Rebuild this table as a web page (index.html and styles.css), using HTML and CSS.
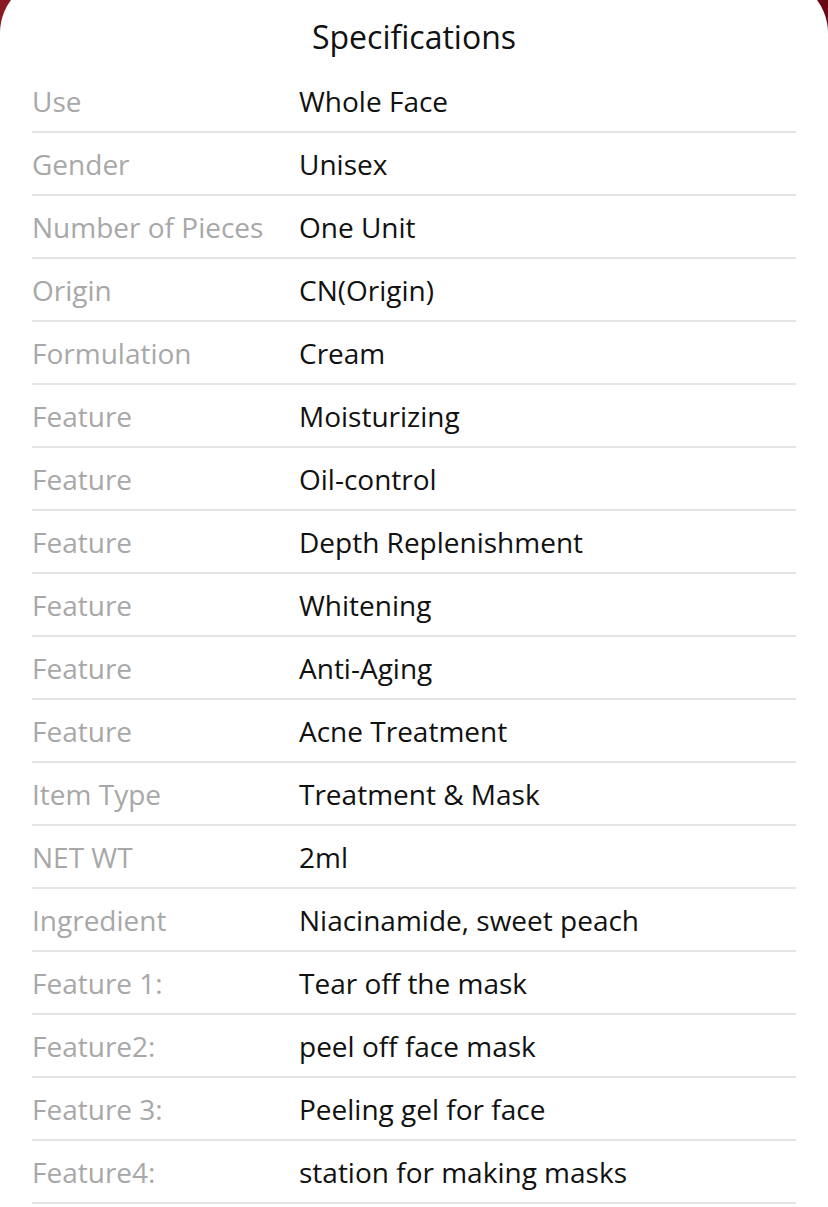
FILE: index.html
```html
<!DOCTYPE html>
<html>
<head>
<meta charset="utf-8">
<link rel="stylesheet" href="styles.css">
</head>
<body>
<div class="sheet">
  <h1 class="title">Specifications</h1>
  <div class="specs">
    <div class="row"><span class="label">Use</span><span class="value">Whole Face</span></div>
    <div class="row"><span class="label">Gender</span><span class="value">Unisex</span></div>
    <div class="row"><span class="label">Number of Pieces</span><span class="value">One Unit</span></div>
    <div class="row"><span class="label">Origin</span><span class="value">CN(Origin)</span></div>
    <div class="row"><span class="label">Formulation</span><span class="value">Cream</span></div>
    <div class="row"><span class="label">Feature</span><span class="value">Moisturizing</span></div>
    <div class="row"><span class="label">Feature</span><span class="value">Oil-control</span></div>
    <div class="row"><span class="label">Feature</span><span class="value">Depth Replenishment</span></div>
    <div class="row"><span class="label">Feature</span><span class="value">Whitening</span></div>
    <div class="row"><span class="label">Feature</span><span class="value">Anti-Aging</span></div>
    <div class="row"><span class="label">Feature</span><span class="value">Acne Treatment</span></div>
    <div class="row"><span class="label">Item Type</span><span class="value">Treatment &amp; Mask</span></div>
    <div class="row"><span class="label">NET WT</span><span class="value">2ml</span></div>
    <div class="row"><span class="label">Ingredient</span><span class="value">Niacinamide, sweet peach</span></div>
    <div class="row"><span class="label">Feature 1:</span><span class="value">Tear off the mask</span></div>
    <div class="row"><span class="label">Feature2:</span><span class="value">peel off face mask</span></div>
    <div class="row"><span class="label">Feature 3:</span><span class="value">Peeling gel for face</span></div>
    <div class="row"><span class="label">Feature4:</span><span class="value">station for making masks</span></div>
  </div>
</div>
</body>
</html>
```

FILE: styles.css
```css
html, body {
  margin: 0;
  padding: 0;
}
body {
  background: linear-gradient(90deg, #8a1a22 0%, #7a1119 50%, #6a0812 100%);
  font-family: "Open Sans", "Noto Sans", sans-serif;
  height: 1207px;
  overflow: hidden;
}
.sheet {
  background: #fff;
  margin-top: -22px;
  padding: 22px 32px 0;
  border-radius: 55px 55px 0 0;
  height: 1229px;
  box-sizing: border-box;
}
.title {
  margin: 0;
  height: 70px;
  box-sizing: border-box;
  padding-top: 4px;
  display: flex;
  align-items: center;
  justify-content: center;
  font-size: 32px;
  font-weight: 400;
  color: #111;
  line-height: 1;
}
.specs {
  display: flex;
  flex-direction: column;
}
.row {
  display: grid;
  grid-template-columns: 267px 1fr;
  align-items: center;
  height: 63px;
  box-sizing: border-box;
  padding-top: 2px;
  border-bottom: 2px solid #e4e4e4;
  font-size: 28px;
  line-height: 1.2;
}
.label {
  color: #a8a8a8;
}
.value {
  color: #111;
}
```
